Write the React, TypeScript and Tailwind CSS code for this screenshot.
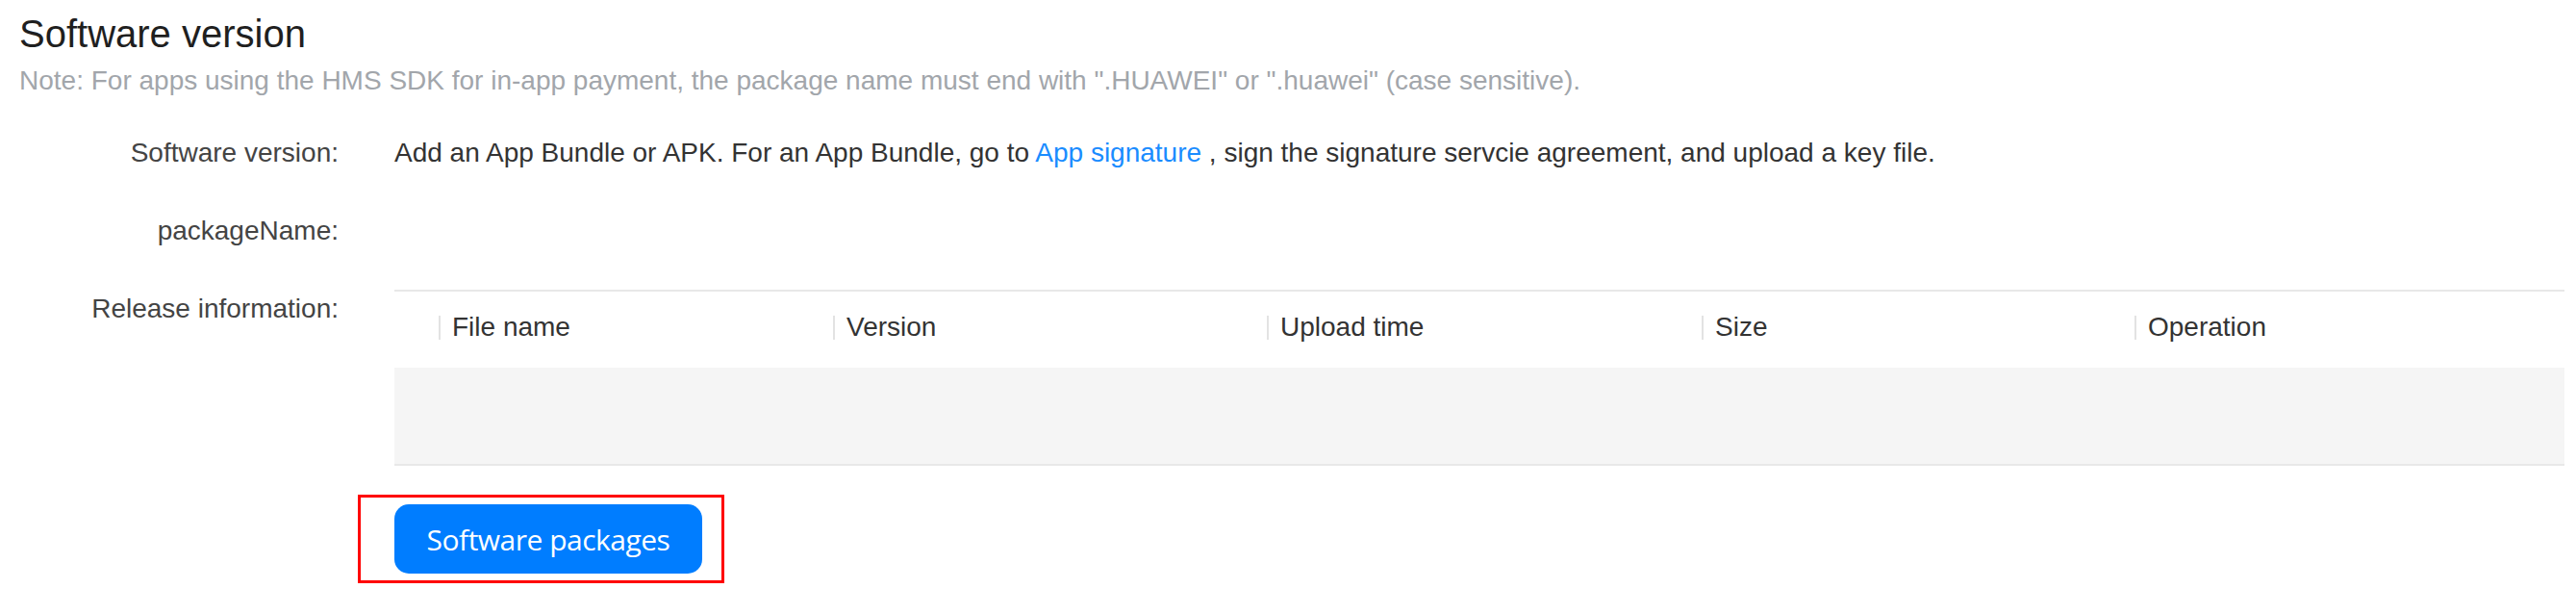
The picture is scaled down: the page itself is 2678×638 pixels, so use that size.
const columns = ["File name", "Version", "Upload time", "Size", "Operation"];

function Label({ children }: { children: React.ReactNode }) {
  return (
    <div className="w-[352px] shrink-0 pr-[20px] text-right text-[28px] leading-[40px] text-[#444444]">
      {children}:
    </div>
  );
}

export default function App() {
  return (
    <div className="min-h-screen bg-white pl-[20px] pr-[12px] font-['Liberation_Sans',Arial,sans-serif]">
      <h1 className="pt-[7px] text-[40px] leading-[56px] font-normal text-[#1f1f1f]">Software version</h1>
      <p className="mt-px text-[28px] leading-[40px] text-[#a2a6ab]">
        Note: For apps using the HMS SDK for in-app payment, the package name must end with ".HUAWEI" or
        ".huawei" (case sensitive).
      </p>

      <div className="mt-[35px] flex flex-col gap-[41px]">
        <div className="flex">
          <Label>Software version</Label>
          <div className="ml-[38px] text-[28px] leading-[40px] text-[#333333]">
            Add an App Bundle or APK. For an App Bundle, go to{" "}
            <a className="text-[#1a8cff]">App signature</a> , sign the signature servcie agreement, and upload a key
            file.
          </div>
        </div>

        <div className="flex">
          <Label>packageName</Label>
        </div>

        <div className="flex">
          <Label>Release information</Label>
          <div className="ml-[38px] flex-1 border-y-2 border-[#e8e8e8]">
            <div className="grid h-[79px] grid-cols-[46px_410px_451px_452px_450px_1fr] pt-[17px]">
              <div />
              {columns.map((c) => (
                <div key={c} className="flex h-[40px] items-center gap-[12px]">
                  <span className="h-[25px] w-[2px] bg-[#e3e3e3]" />
                  <span className="text-[28px] leading-[40px] text-[#333333]">{c}</span>
                </div>
              ))}
            </div>
            <div className="h-[100px] bg-[#f5f5f5]" />
          </div>
        </div>
      </div>

      <div className="ml-[352px] mt-[30px] w-fit border-[3px] border-[#ff0000] pt-[7px] pr-[20px] pb-[7px] pl-[35px]">
        <button className="flex h-[72px] w-[320px] items-center justify-center rounded-[15px] bg-[#007dff] font-['Open_Sans',sans-serif] text-[30px] tracking-[-0.5px] text-white">
          Software packages
        </button>
      </div>
    </div>
  );
}
